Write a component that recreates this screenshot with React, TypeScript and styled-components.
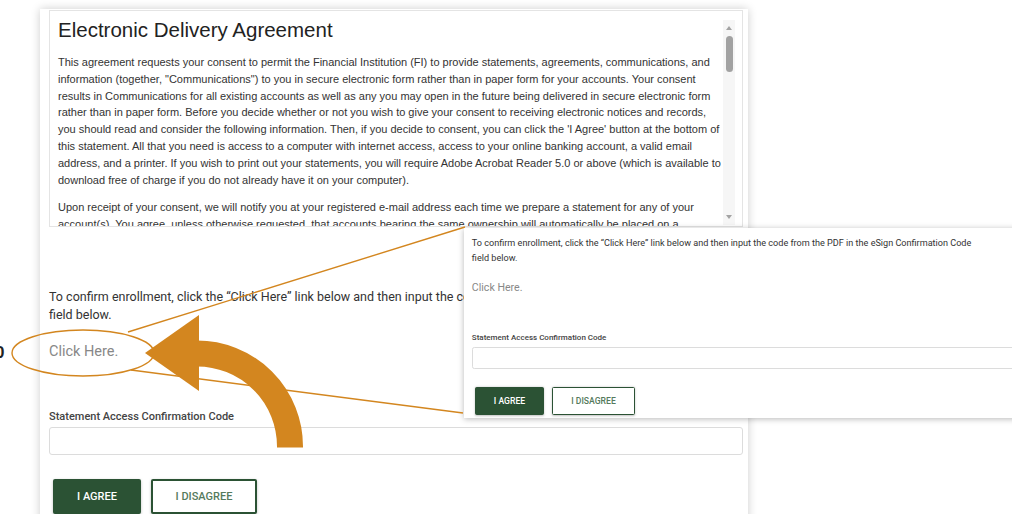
import { FC } from 'react';
import styled, { createGlobalStyle } from 'styled-components';

const ORANGE = '#d3861f';
const GREEN = '#2b5234';

const GlobalStyle = createGlobalStyle`
  html, body {
    margin: 0;
    padding: 0;
    background: #fff;
  }
  body {
    overflow: hidden;
  }
  * {
    box-sizing: border-box;
  }
`;

const Page = styled.div`
  position: relative;
  width: 1012px;
  height: 514px;
  overflow: hidden;
  padding: 9px 0 0 40px;
`;

const Card = styled.div`
  width: 708px;
  min-height: 540px;
  background: #fff;
  box-shadow: 0 0 9px rgba(0, 0, 0, 0.2);
  padding: 1px 5px 0 9px;
`;

const AgreementBox = styled.div`
  display: flex;
  height: 217px;
  border: 1px solid #e4e4e4;
`;

const AgreementBody = styled.div`
  flex: 1;
  overflow: hidden;
  padding: 6px 0 0 8px;
  font-family: 'Liberation Sans', Arial, sans-serif;
  color: #333;
`;

const Title = styled.h2`
  margin: 0 0 10.5px;
  font-size: 20.5px;
  font-weight: 400;
  line-height: 26.5px;
  color: #222;
`;

const Para = styled.p`
  margin: 0 0 11px;
  font-size: 11px;
  line-height: 16.8px;
`;

const ScrollRail = styled.div`
  width: 12px;
  margin: 9px 7px 1px 0;
  background: #f6f6f6;
  display: flex;
  flex-direction: column;
  align-items: center;
`;

const RailArrow = styled.div<{ $dir: 'up' | 'down' }>`
  height: 16px;
  display: flex;
  align-items: center;
  justify-content: center;
  &::before {
    content: '';
    border-left: 3.5px solid transparent;
    border-right: 3.5px solid transparent;
    ${(p) => (p.$dir === 'up' ? 'border-bottom: 4px solid #a3a3a3;' : 'border-top: 4px solid #a3a3a3;')}
  }
`;

const RailThumb = styled.div`
  width: 7px;
  height: 36px;
  border-radius: 4px;
  background: #a2a2a2;
`;

const RailSpace = styled.div`
  flex: 1;
`;

const ConfirmArea = styled.div`
  margin-top: 61px;
`;

// the compact variant is the smaller-type layout used in the preview panel
const Confirm = styled.div<{ $compact?: boolean }>`
  font-family: Roboto, 'Liberation Sans', sans-serif;
  --intro-size: ${(p) => (p.$compact ? '11.6px' : '12.5px')};
  --intro-line: ${(p) => (p.$compact ? '19px' : '18px')};
  --intro-width: ${(p) => (p.$compact ? '655px' : '100%')};
  --link-size: ${(p) => (p.$compact ? '13.5px' : '14.5px')};
  --label-size: ${(p) => (p.$compact ? '10.2px' : '11px')};
`;

const Intro = styled.p`
  margin: 0;
  max-width: var(--intro-width);
  font-size: var(--intro-size);
  line-height: var(--intro-line);
  color: #333;
`;

const ClickHere = styled.a`
  display: block;
  width: fit-content;
  margin-top: 18px;
  font-size: var(--link-size);
  line-height: 20px;
  color: #888;
  text-decoration: none;
`;

const FieldLabel = styled.label`
  display: block;
  margin-top: 47px;
  font-size: var(--label-size);
  font-weight: 500;
  line-height: 16px;
  color: #444;
`;

const CodeInput = styled.input`
  display: block;
  width: 100%;
  height: 28px;
  margin: 2px 0 0;
  border: 1px solid #dcdcdc;
  border-radius: 3px;
  background: #fff;
`;

const ButtonRow = styled.div`
  display: flex;
  gap: 10px;
  margin-top: 24px;
  padding-left: 4px;
`;

const ActionButton = styled.button<{ $primary?: boolean }>`
  width: ${(p) => (p.$primary ? '88px' : '106px')};
  height: 35px;
  border: 2px solid ${GREEN};
  border-radius: 2px;
  background: ${(p) => (p.$primary ? GREEN : '#fff')};
  color: ${(p) => (p.$primary ? '#fff' : '#557a5c')};
  font-family: Roboto, 'Liberation Sans', sans-serif;
  font-size: 11px;
  font-weight: 500;
  text-transform: uppercase;
  box-shadow: 0 1px 3px rgba(0, 0, 0, 0.25);
  cursor: pointer;
`;

const Inset = styled.div`
  position: absolute;
  left: 464px;
  top: 228px;
  width: 570px;
  height: 190px;
  background: #fff;
  box-shadow: 0 1px 6px rgba(0, 0, 0, 0.28);
  overflow: hidden;
`;

const InsetZoom = styled.div`
  zoom: 0.785;
  width: 714px;
  padding: 10px 10px 0 10px;
`;

const SideMark = styled.span`
  position: absolute;
  left: -5px;
  top: 343px;
  font-family: 'Liberation Sans', Arial, sans-serif;
  font-size: 17px;
  font-weight: 700;
  color: #222;
`;

const Callout = styled.svg`
  position: absolute;
  left: 0;
  top: 0;
  pointer-events: none;
`;

const ConfirmSection: FC<{ compact?: boolean }> = ({ compact }) => (
  <Confirm $compact={compact}>
    <Intro>
      To confirm enrollment, click the “Click Here” link below and then input the code from the PDF in the eSign
      Confirmation Code field below.
    </Intro>
    <ClickHere href="#">Click Here.</ClickHere>
    <FieldLabel>Statement Access Confirmation Code</FieldLabel>
    <CodeInput type="text" />
    <ButtonRow>
      <ActionButton $primary>I Agree</ActionButton>
      <ActionButton>I Disagree</ActionButton>
    </ButtonRow>
  </Confirm>
);

const App: FC = () => (
  <Page>
    <GlobalStyle />
    <SideMark>0</SideMark>
    <Card>
      <AgreementBox>
        <AgreementBody>
          <Title>Electronic Delivery Agreement</Title>
          <Para>
            This agreement requests your consent to permit the Financial Institution (FI) to provide statements,
            agreements, communications, and information (together, "Communications") to you in secure electronic form
            rather than in paper form for your accounts. Your consent results in Communications for all existing
            accounts as well as any you may open in the future being delivered in secure electronic form rather than in
            paper form. Before you decide whether or not you wish to give your consent to receiving electronic notices
            and records, you should read and consider the following information. Then, if you decide to consent, you
            can click the 'I Agree' button at the bottom of this statement. All that you need is access to a computer
            with internet access, access to your online banking account, a valid email address, and a printer. If you
            wish to print out your statements, you will require Adobe Acrobat Reader 5.0 or above (which is available
            to download free of charge if you do not already have it on your computer).
          </Para>
          <Para>
            Upon receipt of your consent, we will notify you at your registered e-mail address each time we prepare a
            statement for any of your account(s). You agree, unless otherwise requested, that accounts bearing the same
            ownership will automatically be placed on a combined statement.
          </Para>
        </AgreementBody>
        <ScrollRail>
          <RailArrow $dir="up" />
          <RailThumb />
          <RailSpace />
          <RailArrow $dir="down" />
        </ScrollRail>
      </AgreementBox>
      <ConfirmArea>
        <ConfirmSection />
      </ConfirmArea>
    </Card>

    <Inset>
      <InsetZoom>
        <ConfirmSection compact />
      </InsetZoom>
    </Inset>

    <Callout width="1012" height="514" viewBox="0 0 1012 514">
      <ellipse cx="83" cy="353" rx="71" ry="23" fill="none" stroke={ORANGE} strokeWidth="1.4" />
      <line x1="128" y1="332" x2="465" y2="227" stroke={ORANGE} strokeWidth="1.4" />
      <line x1="131" y1="370" x2="463" y2="413" stroke={ORANGE} strokeWidth="1.4" />
      <path d="M 197 353.5 A 93 93 0 0 1 290 446.5 L 290 447.5" fill="none" stroke={ORANGE} strokeWidth="26" />
      <polygon points="145,353 199,315 199,391" fill={ORANGE} />
    </Callout>
  </Page>
);

export default App;
